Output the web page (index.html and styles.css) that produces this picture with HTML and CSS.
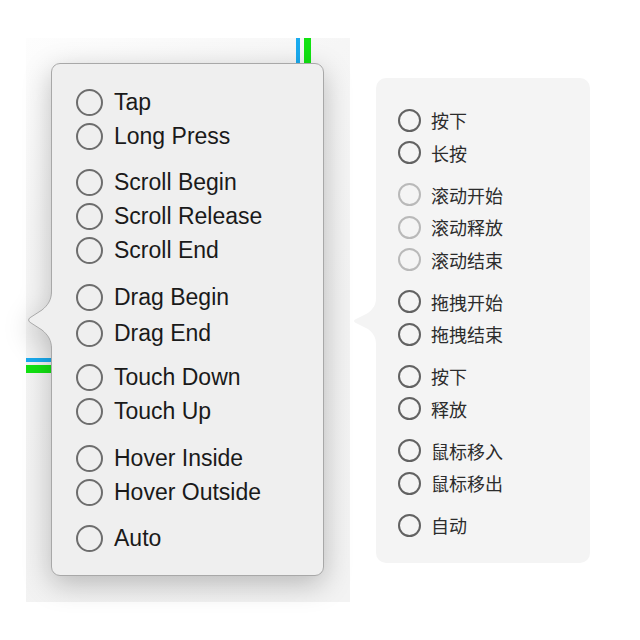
FILE: index.html
```html
<!DOCTYPE html>
<html lang="en">
<head>
<meta charset="utf-8">
<title>Trigger popovers</title>
<link rel="stylesheet" href="styles.css">
</head>
<body>
<main class="stage">
  <section class="canvas">
    <span class="guide guide-top guide-blue"></span>
    <span class="guide guide-top guide-green"></span>
    <span class="guide guide-left guide-blue"></span>
    <span class="guide guide-left guide-green"></span>
    <div class="popover popover-en">
      <svg class="arrow arrow-en" width="26" height="58" viewBox="0 0 26 58">
        <path class="arrow-fill" d="M26,0 L24.5,0 C24.5,9 21,14 15,19 L2.5,27 Q0.5,29 2.5,31 L15,39 C21,44 24.5,49 24.5,58 L26,58 Z"/>
        <path class="arrow-stroke" d="M24.5,0 C24.5,9 21,14 15,19 L2.5,27 Q0.5,29 2.5,31 L15,39 C21,44 24.5,49 24.5,58"/>
      </svg>
      <ul class="group">
        <li class="option"><span class="radio"></span><span class="label">Tap</span></li>
        <li class="option"><span class="radio"></span><span class="label">Long Press</span></li>
      </ul>
      <ul class="group">
        <li class="option"><span class="radio"></span><span class="label">Scroll Begin</span></li>
        <li class="option"><span class="radio"></span><span class="label">Scroll Release</span></li>
        <li class="option"><span class="radio"></span><span class="label">Scroll End</span></li>
      </ul>
      <ul class="group group-drag">
        <li class="option"><span class="radio"></span><span class="label">Drag Begin</span></li>
        <li class="option"><span class="radio"></span><span class="label">Drag End</span></li>
      </ul>
      <ul class="group">
        <li class="option"><span class="radio"></span><span class="label">Touch Down</span></li>
        <li class="option"><span class="radio"></span><span class="label">Touch Up</span></li>
      </ul>
      <ul class="group">
        <li class="option"><span class="radio"></span><span class="label">Hover Inside</span></li>
        <li class="option"><span class="radio"></span><span class="label">Hover Outside</span></li>
      </ul>
      <ul class="group">
        <li class="option"><span class="radio"></span><span class="label">Auto</span></li>
      </ul>
    </div>
  </section>

  <div class="popover popover-zh" lang="zh-CN">
    <svg class="arrow arrow-zh" width="25" height="46" viewBox="0 0 25 46">
      <path class="arrow-fill-zh" d="M25,0 L23,0 C23,7 20,11 15,15 L2,21.5 Q0,23 2,24.5 L15,31 C20,35 23,39 23,46 L25,46 Z"/>
    </svg>
    <ul class="group">
      <li class="option"><span class="radio"></span><span class="label">按下</span></li>
      <li class="option"><span class="radio"></span><span class="label">长按</span></li>
    </ul>
    <ul class="group">
      <li class="option is-disabled"><span class="radio"></span><span class="label">滚动开始</span></li>
      <li class="option is-disabled"><span class="radio"></span><span class="label">滚动释放</span></li>
      <li class="option is-disabled"><span class="radio"></span><span class="label">滚动结束</span></li>
    </ul>
    <ul class="group">
      <li class="option"><span class="radio"></span><span class="label">拖拽开始</span></li>
      <li class="option"><span class="radio"></span><span class="label">拖拽结束</span></li>
    </ul>
    <ul class="group">
      <li class="option"><span class="radio"></span><span class="label">按下</span></li>
      <li class="option"><span class="radio"></span><span class="label">释放</span></li>
    </ul>
    <ul class="group">
      <li class="option"><span class="radio"></span><span class="label">鼠标移入</span></li>
      <li class="option"><span class="radio"></span><span class="label">鼠标移出</span></li>
    </ul>
    <ul class="group">
      <li class="option"><span class="radio"></span><span class="label">自动</span></li>
    </ul>
  </div>
</main>
</body>
</html>
```

FILE: styles.css
```css
html, body {
  margin: 0;
  padding: 0;
  background: #ffffff;
}

body {
  width: 640px;
  height: 640px;
  overflow: hidden;
  font-family: "Liberation Sans", Arial, "Noto Sans CJK SC", sans-serif;
}

.stage {
  display: flex;
  align-items: flex-start;
  padding: 38px 0 0 26px;
}

.canvas {
  position: relative;
  box-sizing: border-box;
  width: 324px;
  height: 564px;
  padding: 25px 0 0 25px;
  background: linear-gradient(150deg, #fdfdfd 0%, #f6f6f6 25%, #f2f2f2 60%, #f3f3f3 100%);
}

.guide {
  position: absolute;
  display: block;
}

.guide-top {
  top: 0;
  height: 40px;
}

.guide-top.guide-blue {
  left: 270px;
  width: 4px;
  background: #1aabef;
}

.guide-top.guide-green {
  left: 278px;
  width: 7px;
  background: #12e212;
}

.guide-left {
  left: 0;
  width: 32px;
}

.guide-left.guide-blue {
  top: 320px;
  height: 4px;
  background: #1aabef;
}

.guide-left.guide-green {
  top: 327px;
  height: 8px;
  background: #12e212;
}

.popover {
  position: relative;
  box-sizing: border-box;
  display: flex;
  flex-direction: column;
}

.popover-en {
  width: 273px;
  height: 513px;
  padding: 21px 0 0 24px;
  gap: 12.5px;
  background: #efefef;
  border: 1px solid #a8a8a8;
  border-radius: 9px;
  filter: drop-shadow(0 8px 14px rgba(0, 0, 0, 0.24));
}

.arrow {
  position: absolute;
  display: block;
}

.arrow-en {
  left: -25px;
  top: 227px;
}

.arrow-fill {
  fill: #efefef;
}

.arrow-stroke {
  fill: none;
  stroke: #a8a8a8;
  stroke-width: 1;
}

.popover-zh {
  margin: 40px 0 0 26px;
  width: 214px;
  height: 485px;
  padding: 25.75px 0 0 22px;
  gap: 9.5px;
  background: #f4f4f4;
  border-radius: 10px;
  font-family: "Noto Sans CJK SC", "Liberation Sans", sans-serif;
}

.arrow-zh {
  left: -23px;
  top: 220px;
}

.arrow-fill-zh {
  fill: #f4f4f4;
}

.group {
  list-style: none;
  margin: 0;
  padding: 0;
  display: flex;
  flex-direction: column;
}

.group-drag {
  gap: 2px;
  margin-bottom: -2px;
}

.option {
  display: flex;
  align-items: center;
}

.popover-en .option {
  height: 34px;
  gap: 11px;
  font-size: 23px;
  color: #1a1a1a;
}

.popover-en .radio {
  width: 27px;
  height: 27px;
  border: 2px solid #6d6d6d;
}

.popover-zh .option {
  height: 32.5px;
  gap: 10px;
  font-size: 18px;
  color: #2c2c2c;
}

.popover-zh .radio {
  width: 23px;
  height: 23px;
  border: 2px solid #626262;
}

.radio {
  box-sizing: border-box;
  flex: none;
  border-radius: 50%;
  background: transparent;
}

.popover-zh .option.is-disabled .radio {
  border-color: #b9b9b9;
}

.label {
  white-space: nowrap;
}
```
